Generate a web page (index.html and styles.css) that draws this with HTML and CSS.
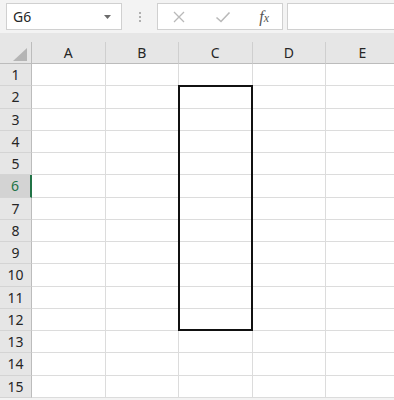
FILE: index.html
```html
<!DOCTYPE html>
<html lang="en">
  <head>
    <meta charset="UTF-8" />
    <title>Sheet</title>
    <link rel="stylesheet" href="styles.css">
  </head>
  <body>
    <!-- name box + formula bar -->
    <div class="toolbar">
      <div class="name-box">
        <span>G6</span>
        <svg class="caret" width="7" height="4" viewBox="0 0 7 4"><polygon points="0,0 7,0 3.5,4" fill="#6b6b6b"/></svg>
      </div>
      <div class="grip"><i></i><i></i><i></i></div>
      <div class="fx-box">
        <svg width="14" height="14" viewBox="0 0 14 14"><path d="M2 2 L12 12 M12 2 L2 12" stroke="#b9b9b9" stroke-width="1.3" fill="none"/></svg>
        <svg width="16" height="14" viewBox="0 0 16 14"><path d="M1.5 7.5 L6 11.5 L14.5 2.5" stroke="#b9b9b9" stroke-width="1.6" fill="none"/></svg>
        <span class="fx">f<small>x</small></span>
      </div>
      <div class="formula"></div>
    </div>

    <div class="sheet">
      <div class="corner"><svg width="14" height="13" viewBox="0 0 14 13"><polygon points="14,0 14,13 0,13" fill="#b5b5b5"/></svg></div>
      <div class="col-head">A</div>
      <div class="col-head">B</div>
      <div class="col-head">C</div>
      <div class="col-head">D</div>
      <div class="col-head">E</div>

      <div class="row-head">1</div><div class="cell"></div><div class="cell"></div><div class="cell"></div><div class="cell"></div><div class="cell"></div>
      <div class="row-head">2</div><div class="cell"></div><div class="cell"></div><div class="cell"></div><div class="cell"></div><div class="cell"></div>
      <div class="row-head">3</div><div class="cell"></div><div class="cell"></div><div class="cell"></div><div class="cell"></div><div class="cell"></div>
      <div class="row-head">4</div><div class="cell"></div><div class="cell"></div><div class="cell"></div><div class="cell"></div><div class="cell"></div>
      <div class="row-head">5</div><div class="cell"></div><div class="cell"></div><div class="cell"></div><div class="cell"></div><div class="cell"></div>
      <div class="row-head active">6</div><div class="cell"></div><div class="cell"></div><div class="cell"></div><div class="cell"></div><div class="cell"></div>
      <div class="row-head">7</div><div class="cell"></div><div class="cell"></div><div class="cell"></div><div class="cell"></div><div class="cell"></div>
      <div class="row-head">8</div><div class="cell"></div><div class="cell"></div><div class="cell"></div><div class="cell"></div><div class="cell"></div>
      <div class="row-head">9</div><div class="cell"></div><div class="cell"></div><div class="cell"></div><div class="cell"></div><div class="cell"></div>
      <div class="row-head">10</div><div class="cell"></div><div class="cell"></div><div class="cell"></div><div class="cell"></div><div class="cell"></div>
      <div class="row-head">11</div><div class="cell"></div><div class="cell"></div><div class="cell"></div><div class="cell"></div><div class="cell"></div>
      <div class="row-head">12</div><div class="cell"></div><div class="cell"></div><div class="cell"></div><div class="cell"></div><div class="cell"></div>
      <div class="row-head">13</div><div class="cell"></div><div class="cell"></div><div class="cell"></div><div class="cell"></div><div class="cell"></div>
      <div class="row-head">14</div><div class="cell"></div><div class="cell"></div><div class="cell"></div><div class="cell"></div><div class="cell"></div>
      <div class="row-head">15</div><div class="cell"></div><div class="cell"></div><div class="cell"></div><div class="cell"></div><div class="cell"></div>

      <!-- outlined range C2:C12, drawn over the cells -->
      <div class="range"></div>
    </div>
  </body>
</html>
```

FILE: styles.css
```css
body {
  margin: 0;
  width: 394px;
  height: 400px;
  overflow: hidden;
  background: #f3f3f3;
  font-family: "Noto Sans", "Open Sans", sans-serif;
  color: #262626;
}
.toolbar {
  display: flex;
  align-items: stretch;
  height: 27px;
  padding: 3px 0 3px 6px;
}
.name-box {
  width: 116px;
  box-sizing: border-box;
  background: #fff;
  border: 1px solid #d0d0d0;
  display: flex;
  align-items: center;
  justify-content: space-between;
  padding: 0 10px 0 6px;
  font-size: 14px;
}
.grip {
  width: 35px;
  display: flex;
  flex-direction: column;
  align-items: center;
  justify-content: center;
  gap: 2px;
}
.grip i {
  width: 2px;
  height: 2px;
  background: #b0b0b0;
}
.fx-box {
  width: 126px;
  box-sizing: border-box;
  background: #fff;
  border: 1px solid #d0d0d0;
  display: flex;
  align-items: center;
  justify-content: space-between;
  padding: 0 13px 0 14px;
}
.fx {
  font-family: "Liberation Serif", serif;
  font-style: italic;
  font-size: 16px;
  color: #555;
}
.fx small {
  font-size: 12px;
}
.formula {
  flex: 1;
  margin-left: 4px;
  background: #fff;
  border: 1px solid #d0d0d0;
  border-right: none;
}
.sheet {
  position: relative;
  display: grid;
  grid-template-columns: 32px 73.5px 73.5px 73.5px 73.5px 74px;
  grid-template-rows: 22px repeat(15, 22.25px);
  padding-top: 9px;
  background: #e6e6e6;
  font-size: 14px;
}
.sheet > div {
  box-sizing: border-box;
}
.corner {
  display: flex;
  align-items: flex-end;
  justify-content: flex-end;
  padding: 0 4px 2px 0;
  border-right: 1px solid #bcbcbc;
  border-bottom: 1px solid #bcbcbc;
}
.col-head {
  display: flex;
  align-items: center;
  justify-content: center;
  border-right: 1px solid #cfcfcf;
  border-bottom: 1px solid #bcbcbc;
}
.row-head {
  display: flex;
  align-items: center;
  justify-content: center;
  border-right: 1px solid #bcbcbc;
  border-bottom: 1px solid #d4d4d4;
}
.row-head.active {
  background: #d3d3d3;
  color: #217346;
  border-right: 2px solid #217346;
}
.cell {
  background: #fff;
  border-right: 1px solid #dcdcdc;
  border-bottom: 1px solid #dcdcdc;
}
.range {
  position: absolute;
  grid-column: 4 / 5;
  grid-row: 3 / 14;
  top: -1px;
  left: -1px;
  right: 0;
  bottom: 0;
  border: 2px solid #111;
}
```
